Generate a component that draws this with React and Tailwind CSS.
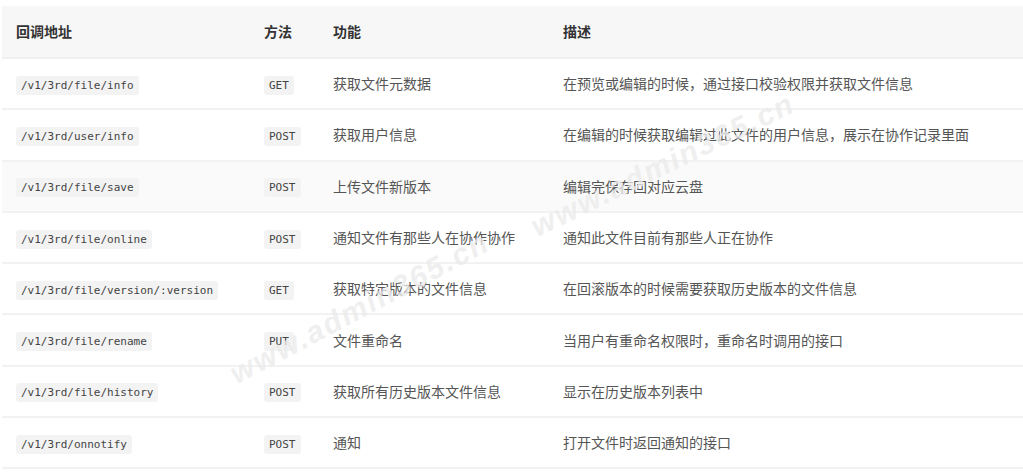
import React from 'react';

const rows = [
  { path: '/v1/3rd/file/info', method: 'GET', fn: '获取文件元数据', desc: '在预览或编辑的时候，通过接口校验权限并获取文件信息' },
  { path: '/v1/3rd/user/info', method: 'POST', fn: '获取用户信息', desc: '在编辑的时候获取编辑过此文件的用户信息，展示在协作记录里面' },
  { path: '/v1/3rd/file/save', method: 'POST', fn: '上传文件新版本', desc: '编辑完保存回对应云盘', active: true },
  { path: '/v1/3rd/file/online', method: 'POST', fn: '通知文件有那些人在协作协作', desc: '通知此文件目前有那些人正在协作' },
  { path: '/v1/3rd/file/version/:version', method: 'GET', fn: '获取特定版本的文件信息', desc: '在回滚版本的时候需要获取历史版本的文件信息' },
  { path: '/v1/3rd/file/rename', method: 'PUT', fn: '文件重命名', desc: '当用户有重命名权限时，重命名时调用的接口' },
  { path: '/v1/3rd/file/history', method: 'POST', fn: '获取所有历史版本文件信息', desc: '显示在历史版本列表中' },
  { path: '/v1/3rd/onnotify', method: 'POST', fn: '通知', desc: '打开文件时返回通知的接口' },
];

const Code = ({ children }) => (
  <code className="inline-block rounded-[3px] bg-[#f3f3f3] px-[5px] py-[2px] font-['DejaVu_Sans_Mono','Liberation_Mono',monospace] text-[11px] leading-[15px] text-[#444]">
    {children}
  </code>
);

export default function App() {
  return (
    <div className="relative h-[472px] w-[1023px] overflow-hidden bg-white pl-[2px] pt-[6px] font-['Noto_Sans_CJK_SC',sans-serif] text-[14px]">
      <table className="w-[1021px] table-fixed border-collapse">
        <colgroup>
          <col className="w-[248px]" />
          <col className="w-[69px]" />
          <col className="w-[230px]" />
          <col />
        </colgroup>
        <thead>
          <tr className="h-[52px] border-b-2 border-[#f0f0f0] bg-[#f7f7f7] text-left font-bold text-[#333]">
            <th className="pl-[14px]">回调地址</th>
            <th className="pl-[14px]">方法</th>
            <th className="pl-[14px]">功能</th>
            <th className="pl-[14px]">描述</th>
          </tr>
        </thead>
        <tbody className="text-[#555]">
          {rows.map((r) => (
            <tr
              key={r.path}
              className={`h-[51.3px] border-b-2 border-[#f2f2f2] ${r.active ? 'bg-[#fafafa]' : 'bg-white'}`}
            >
              <td className="pl-[14px]"><Code>{r.path}</Code></td>
              <td className="pl-[14px]"><Code>{r.method}</Code></td>
              <td className="pl-[14px] whitespace-nowrap">{r.fn}</td>
              <td className="pl-[14px] whitespace-nowrap">{r.desc}</td>
            </tr>
          ))}
        </tbody>
      </table>

      {/* watermark */}
      <span className="pointer-events-none absolute left-[215px] top-[285px] -rotate-[28deg] select-none font-['Liberation_Sans',sans-serif] text-[30px] font-bold italic tracking-[2px] text-[#ebebeb]/80">
        www.admin365.cn
      </span>
      <span className="pointer-events-none absolute left-[518px] top-[142px] -rotate-[26deg] select-none font-['Liberation_Sans',sans-serif] text-[30px] font-bold italic tracking-[2px] text-[#ebebeb]/80">
        www.admin365.cn
      </span>
    </div>
  );
}
